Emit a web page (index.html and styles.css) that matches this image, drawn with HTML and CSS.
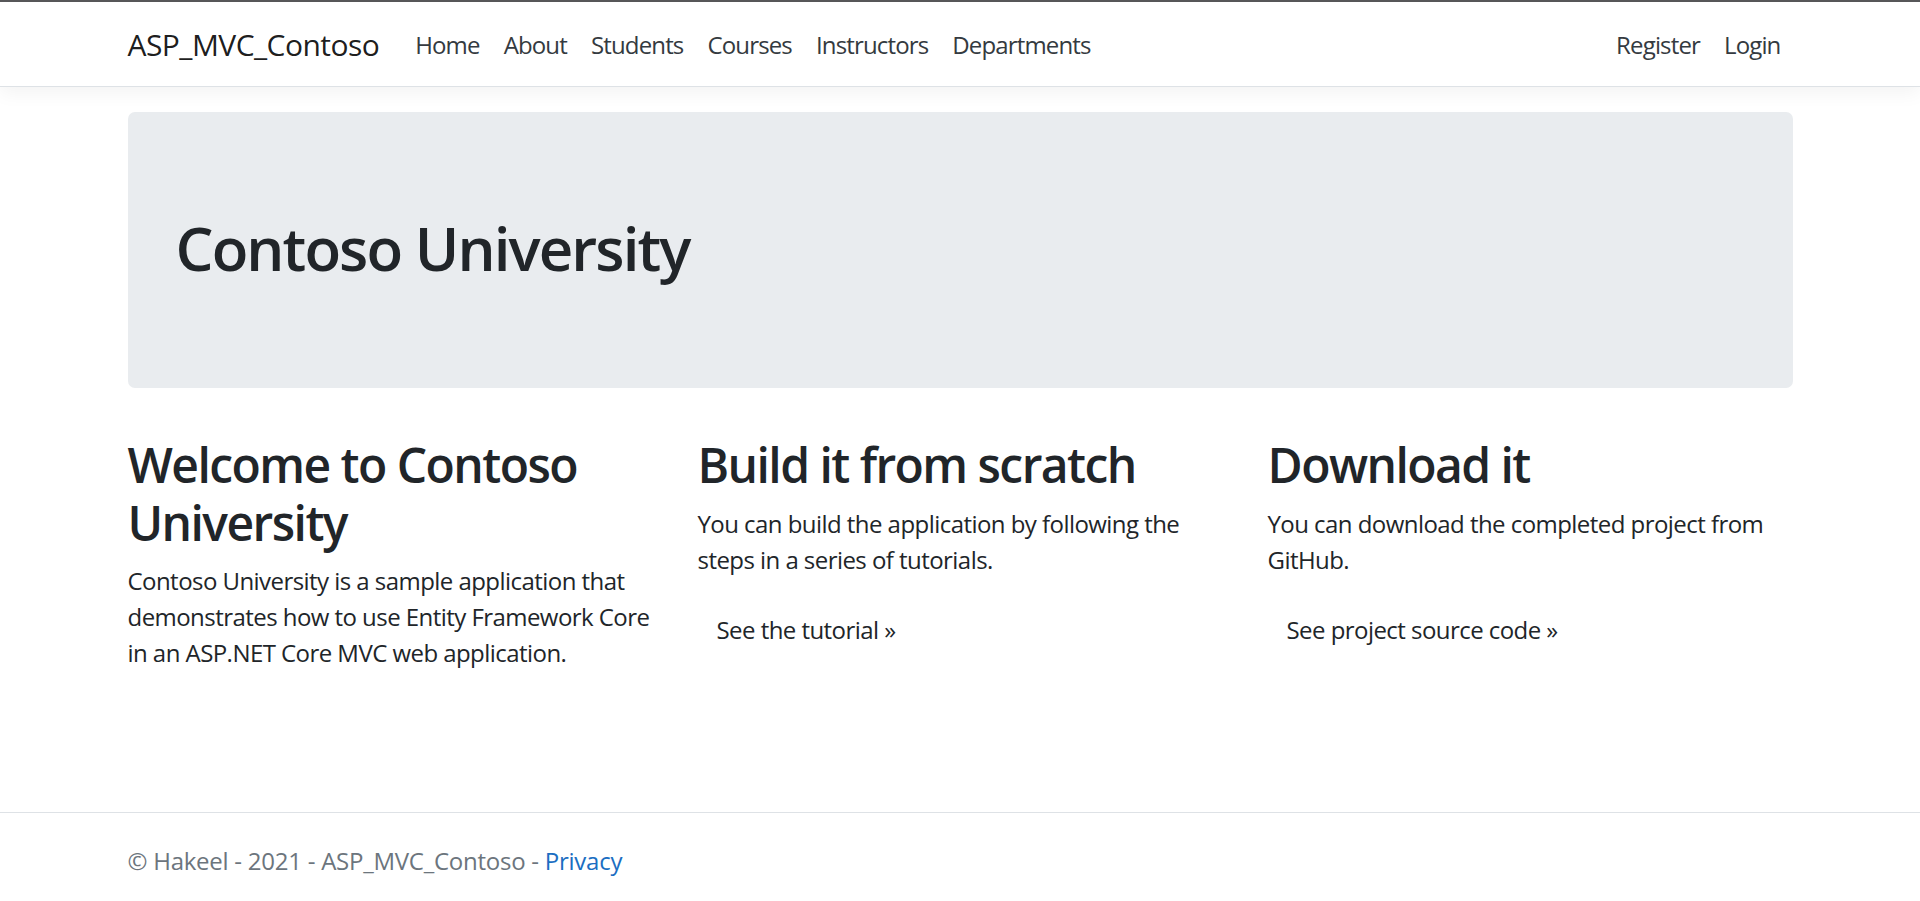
FILE: index.html
```html
<!DOCTYPE html>
<html lang="en">
<head>
<meta charset="utf-8">
<title>Home Page - ASP_MVC_Contoso</title>
<link rel="stylesheet" href="styles.css">
</head>
<body>
<div class="topline"></div>
<header class="navbar">
  <div class="container nav-inner">
    <a class="brand" href="#">ASP_MVC_Contoso</a>
    <ul class="nav-list">
      <li><a class="nav-link" href="#">Home</a></li>
      <li><a class="nav-link" href="#">About</a></li>
      <li><a class="nav-link" href="#">Students</a></li>
      <li><a class="nav-link" href="#">Courses</a></li>
      <li><a class="nav-link" href="#">Instructors</a></li>
      <li><a class="nav-link" href="#">Departments</a></li>
    </ul>
    <ul class="nav-list nav-right">
      <li><a class="nav-link" href="#">Register</a></li>
      <li><a class="nav-link" href="#">Login</a></li>
    </ul>
  </div>
</header>
<main class="container main">
  <div class="jumbotron">
    <h1>Contoso University</h1>
  </div>
  <div class="row">
    <div class="col">
      <h2>Welcome to Contoso University</h2>
      <p>Contoso University is a sample application that demonstrates how to use Entity Framework Core in an ASP.NET Core MVC web application.</p>
    </div>
    <div class="col">
      <h2>Build it from scratch</h2>
      <p>You can build the application by following the steps in a series of tutorials.</p>
      <p><a class="btn" href="#">See the tutorial &raquo;</a></p>
    </div>
    <div class="col">
      <h2>Download it</h2>
      <p>You can download the completed project from GitHub.</p>
      <p><a class="btn" href="#">See project source code &raquo;</a></p>
    </div>
  </div>
</main>
<footer class="footer">
  <div class="container">
    &copy; Hakeel - 2021 - ASP_MVC_Contoso - <a class="footer-link" href="#">Privacy</a>
  </div>
</footer>
</body>
</html>
```
FILE: styles.css
```css
* { box-sizing: border-box; }
html, body { margin: 0; padding: 0; }
body {
  font-family: "Open Sans", "Noto Sans", sans-serif;
  font-size: 24px;
  line-height: 36px;
  letter-spacing: -0.55px;
  color: #212529;
  background: #fff;
  min-height: 901px;
  display: flex;
  flex-direction: column;
}
a { text-decoration: none; }
.topline { height: 2px; background: #58585a; flex: none; }
.container {
  width: 1710px;
  margin: 0 auto;
  padding: 0 22.5px;
}
.navbar {
  padding: 12px 0;
  background: #fff;
  border-bottom: 1px solid #dee2e6;
  box-shadow: 0 6px 18px rgba(0,0,0,.05);
  position: relative;
  z-index: 1;
}
.nav-inner { display: flex; align-items: center; }
.brand {
  font-size: 30px;
  line-height: 45px;
  letter-spacing: -0.55px;
  padding: 8px 0 7px;
  margin-right: 24px;
  color: rgba(0,0,0,.9);
}
.nav-list { display: flex; list-style: none; margin: 0; padding: 0; }
.nav-right { margin-left: auto; }
.nav-link {
  display: block;
  padding: 13px 12px 11px;
  letter-spacing: -0.85px;
  color: #343a40;
}
.main { padding-top: 25px; }
.jumbotron {
  background: #e9ecef;
  border-radius: 7px;
  padding: 96px 48px;
  margin-bottom: 48px;
}
h1 {
  margin: 0 0 8px;
  padding-top: 4px;
  font-size: 60px;
  line-height: 72px;
  font-weight: 600;
  letter-spacing: -1.9px;
}
.row { display: flex; margin: 0 -22.5px; }
.col { width: 570px; padding: 0 22.5px; }
h2 {
  margin: 0 0 12px;
  font-size: 48px;
  line-height: 57.6px;
  font-weight: 600;
  letter-spacing: -1.55px;
}
p { margin: 0 0 24px; }
.btn {
  display: inline-block;
  padding: 9px 18px;
  border: 1.5px solid transparent;
  color: #212529;
}
.footer {
  margin-top: auto;
  border-top: 1px solid #dee2e6;
  padding-top: 8px;
  line-height: 80px;
  color: #6c757d;
  white-space: nowrap;
  letter-spacing: -0.25px;
}
.footer-link { color: #1b6ec2; }
```
